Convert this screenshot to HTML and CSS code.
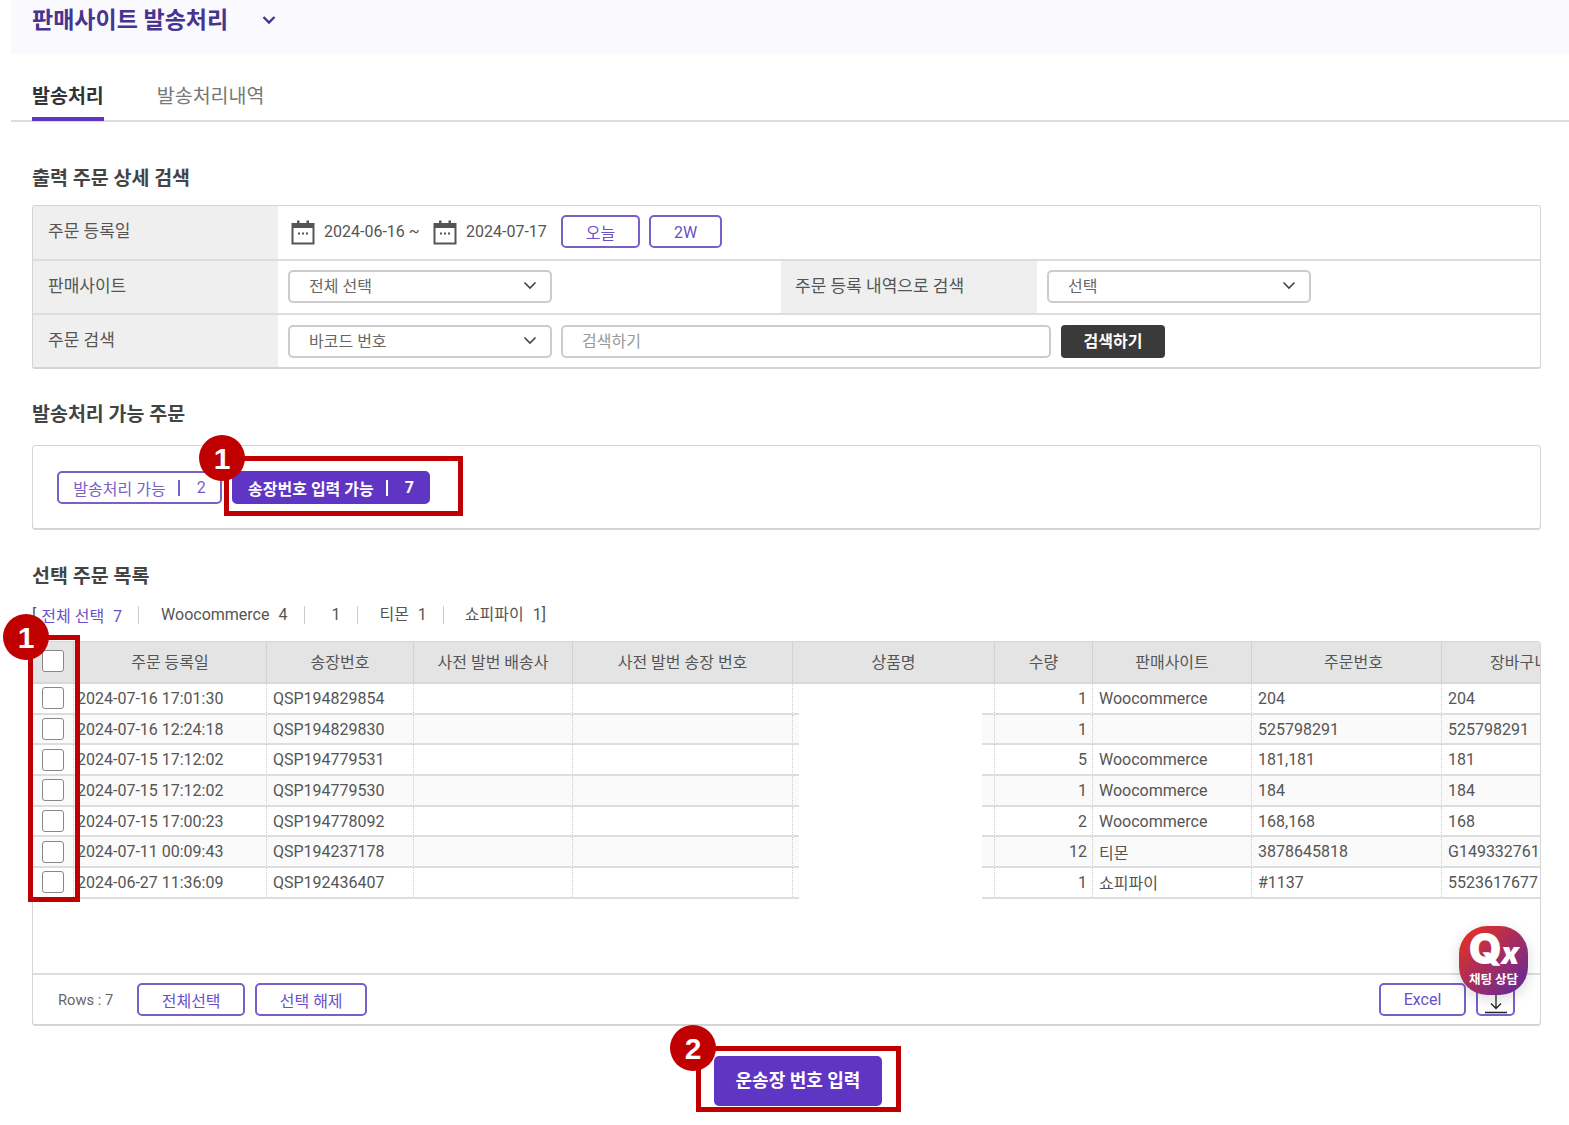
FILE: index.html
```html
<!DOCTYPE html>
<html lang="ko">

<head>
    <meta charset="UTF-8">
    <meta name="viewport" content="width=device-width, initial-scale=1.0">
    <title>판매사이트 발송처리</title>
    <link rel="stylesheet" href="styles.css">
</head>

<body>
    <div class="page">
        <!-- Page header -->
        <header class="page-header">
            <h1>판매사이트 발송처리</h1>
            <svg class="header-chevron" width="14" height="10" viewBox="0 0 14 10">
                <path d="M1.500 2l5.500 5.500 5.500-5.500" fill="none" stroke="#47348f" stroke-width="2.400" />
            </svg>
        </header>

        <!-- Tabs -->
        <nav class="tabs">
            <a class="tab tab-active">발송처리</a>
            <a class="tab">발송처리내역</a>
        </nav>

        <main class="content">
            <!-- Search form -->
            <h2 class="section-title first">출력 주문 상세 검색</h2>
            <div class="search-panel">
                <div class="search-row">
                    <div class="search-label">주문 등록일</div>
                    <div class="search-field">
                        <svg class="cal-icon" width="24" height="26" viewBox="0 0 24 26">
                            <path d="M1.500 5h21v19.500h-21z" fill="none" stroke="#555" stroke-width="2" />
                            <path d="M1 4h22v5H1z" fill="#555" />
                            <path d="M6 1.500h2.500V5H6zM15.500 1.500H18V5h-2.500z" fill="#555" />
                            <path d="M7 13.500h2v2H7zM11 13.500h2v2h-2zM15 13.500h2v2h-2z" fill="#555" />
                        </svg>
                        <span class="date-text">2024-06-16 ~</span>
                        <svg class="cal-icon" width="24" height="26" viewBox="0 0 24 26">
                            <path d="M1.500 5h21v19.500h-21z" fill="none" stroke="#555" stroke-width="2" />
                            <path d="M1 4h22v5H1z" fill="#555" />
                            <path d="M6 1.500h2.500V5H6zM15.500 1.500H18V5h-2.500z" fill="#555" />
                            <path d="M7 13.500h2v2H7zM11 13.500h2v2h-2zM15 13.500h2v2h-2z" fill="#555" />
                        </svg>
                        <span class="date-text date-end">2024-07-17</span>
                        <button class="btn btn-today">오늘</button>
                        <button class="btn btn-2w">2W</button>
                    </div>
                </div>
                <div class="search-row">
                    <div class="search-label">판매사이트</div>
                    <div class="search-field field-half">
                        <div class="select-box">전체 선택
                            <svg width="14" height="9" viewBox="0 0 14 9"><path d="M1.500 1.500L7 7l5.500-5.500" fill="none" stroke="#444" stroke-width="1.600" /></svg>
                        </div>
                    </div>
                    <div class="search-label label-mid">주문 등록 내역으로 검색</div>
                    <div class="search-field">
                        <div class="select-box">선택
                            <svg width="14" height="9" viewBox="0 0 14 9"><path d="M1.500 1.500L7 7l5.500-5.500" fill="none" stroke="#444" stroke-width="1.600" /></svg>
                        </div>
                    </div>
                </div>
                <div class="search-row">
                    <div class="search-label">주문 검색</div>
                    <div class="search-field">
                        <div class="select-box">바코드 번호
                            <svg width="14" height="9" viewBox="0 0 14 9"><path d="M1.500 1.500L7 7l5.500-5.500" fill="none" stroke="#444" stroke-width="1.600" /></svg>
                        </div>
                        <input class="search-input" type="text" placeholder="검색하기">
                        <button class="btn-search">검색하기</button>
                    </div>
                </div>
            </div>

            <!-- Available orders -->
            <h2 class="section-title second">발송처리 가능 주문</h2>
            <div class="status-panel">
                <button class="status-btn">발송처리 가능<i class="bar"></i><span class="status-num">2</span></button>
                <button class="status-btn status-active">송장번호 입력 가능<i class="bar"></i><span class="status-num">7</span></button>
            </div>

            <!-- Order list -->
            <h2 class="section-title third">선택 주문 목록</h2>
            <div class="filter-line">
                <span class="bracket">[</span><span class="filter-all">전체 선택 <b>7</b></span>
                <span class="filter-item">Woocommerce <span class="count">4</span></span>
                <span class="filter-item filter-blank"><span class="count">1</span></span>
                <span class="filter-item filter-short">티몬 <span class="count">1</span></span>
                <span class="filter-item filter-short">쇼피파이 <span class="count">1</span>]</span>
            </div>

            <div class="grid-box">
                <div class="grid-scroll">
                    <table class="grid">
                        <colgroup>
                            <col class="c-check">
                            <col class="c-date">
                            <col class="c-invoice">
                            <col class="c-courier">
                            <col class="c-pre">
                            <col class="c-product">
                            <col class="c-qty">
                            <col class="c-site">
                            <col class="c-order">
                            <col class="c-cart">
                        </colgroup>
                        <thead>
                            <tr>
                                <th><input class="check" type="checkbox"></th>
                                <th>주문 등록일</th>
                                <th>송장번호</th>
                                <th>사전 발번 배송사</th>
                                <th>사전 발번 송장 번호</th>
                                <th>상품명</th>
                                <th>수량</th>
                                <th>판매사이트</th>
                                <th class="th-order">주문번호</th>
                                <th>장바구니</th>
                            </tr>
                        </thead>
                        <tbody>
                            <tr>
                                <td><input class="check" type="checkbox"></td>
                                <td>2024-07-16 17:01:30</td>
                                <td>QSP194829854</td>
                                <td></td>
                                <td></td>
                                <td></td>
                                <td class="num">1</td>
                                <td>Woocommerce</td>
                                <td>204</td>
                                <td>204</td>
                            </tr>
                            <tr>
                                <td><input class="check" type="checkbox"></td>
                                <td>2024-07-16 12:24:18</td>
                                <td>QSP194829830</td>
                                <td></td>
                                <td></td>
                                <td></td>
                                <td class="num">1</td>
                                <td></td>
                                <td>525798291</td>
                                <td>525798291</td>
                            </tr>
                            <tr>
                                <td><input class="check" type="checkbox"></td>
                                <td>2024-07-15 17:12:02</td>
                                <td>QSP194779531</td>
                                <td></td>
                                <td></td>
                                <td></td>
                                <td class="num">5</td>
                                <td>Woocommerce</td>
                                <td>181,181</td>
                                <td>181</td>
                            </tr>
                            <tr>
                                <td><input class="check" type="checkbox"></td>
                                <td>2024-07-15 17:12:02</td>
                                <td>QSP194779530</td>
                                <td></td>
                                <td></td>
                                <td></td>
                                <td class="num">1</td>
                                <td>Woocommerce</td>
                                <td>184</td>
                                <td>184</td>
                            </tr>
                            <tr>
                                <td><input class="check" type="checkbox"></td>
                                <td>2024-07-15 17:00:23</td>
                                <td>QSP194778092</td>
                                <td></td>
                                <td></td>
                                <td></td>
                                <td class="num">2</td>
                                <td>Woocommerce</td>
                                <td>168,168</td>
                                <td>168</td>
                            </tr>
                            <tr>
                                <td><input class="check" type="checkbox"></td>
                                <td>2024-07-11 00:09:43</td>
                                <td>QSP194237178</td>
                                <td></td>
                                <td></td>
                                <td></td>
                                <td class="num">12</td>
                                <td>티몬</td>
                                <td>3878645818</td>
                                <td>G149332761</td>
                            </tr>
                            <tr>
                                <td><input class="check" type="checkbox"></td>
                                <td>2024-06-27 11:36:09</td>
                                <td>QSP192436407</td>
                                <td></td>
                                <td></td>
                                <td></td>
                                <td class="num">1</td>
                                <td>쇼피파이</td>
                                <td>#1137</td>
                                <td>5523617677</td>
                            </tr>
                        </tbody>
                    </table>
                    <!-- product names are blanked out in this capture -->
                    <div class="blank-cover"></div>
                </div>
                <div class="grid-footer">
                    <span class="rows-count">Rows : 7</span>
                    <button class="btn btn-all">전체선택</button>
                    <button class="btn btn-clear">선택 해제</button>
                    <button class="btn btn-excel">Excel</button>
                    <button class="btn btn-down">
                        <svg width="26" height="20" viewBox="0 0 26 20">
                            <path d="M13 1v13M8 9.500l5 5 5-5M2 18.500h22" fill="none" stroke="#222" stroke-width="1.300" />
                        </svg>
                    </button>
                </div>
            </div>

            <div class="action-row">
                <button class="btn-submit">운송장 번호 입력</button>
            </div>
        </main>

        <!-- Floating chat -->
        <div class="chat-badge">
            <span class="chat-logo">Q<em>x</em></span>
            <span class="chat-label">채팅 상담</span>
        </div>

        <!-- Red guide marks drawn on top of the capture -->
        <div class="mark mark-status"></div>
        <div class="mark mark-checks"></div>
        <div class="mark mark-submit"></div>
        <div class="mark-num num-status">1</div>
        <div class="mark-num num-checks">1</div>
        <div class="mark-num num-submit">2</div>
    </div>
</body>

</html>
```

FILE: styles.css
```css
/* Base */
* {
    box-sizing: border-box;
}

body {
    margin: 0;
    background-color: #fff;
    color: #555;
    font-family: Roboto, "Noto Sans CJK KR", sans-serif;
    font-size: 16px;
}

.page {
    position: relative;
    width: 1569px;
    height: 1125px;
    padding-left: 11px;
    overflow: hidden;
}

button {
    font-family: inherit;
    cursor: pointer;
}

/* Header */
.page-header {
    display: flex;
    align-items: center;
    height: 54px;
    padding: 0 0 18px 21px;
    background-color: #faf9fe;
}

.page-header h1 {
    margin: 0;
    font-size: 23px;
    font-weight: 700;
    color: #47348f;
}

.header-chevron {
    margin: 4px 0 0 34px;
}

/* Tabs */
.tabs {
    display: flex;
    gap: 53px;
    height: 68px;
    padding: 28px 0 0 21px;
    border-bottom: 2px solid #ddd;
}

.tab {
    height: 39px;
    font-size: 19.500px;
    line-height: 30px;
    color: #777;
}

.tab-active {
    border-bottom: 4px solid #5f35c4;
    color: #333;
    font-weight: 700;
}

/* Sections */
.content {
    padding: 0 28px 0 21px;
}

.section-title {
    height: 28px;
    font-size: 19.500px;
    font-weight: 700;
    line-height: 28px;
    color: #444;
}

.section-title.first {
    margin: 43px 0 12px;
}

.section-title.second {
    margin: 32px 0 16px;
}

.section-title.third {
    margin: 33px 0 0;
}

/* Search panel */
.search-panel {
    border: 1px solid #d4d4d4;
    border-bottom-width: 2px;
    border-radius: 3px;
    overflow: hidden;
}

.search-row {
    display: flex;
    height: 54px;
    border-bottom: 2px solid #ddd;
}

.search-row:first-child {
    height: 55px;
}

.search-row:last-child {
    height: 52px;
    border-bottom: none;
}

.search-row:last-child .search-field {
    padding-bottom: 0;
}

.search-label {
    flex: 0 0 245px;
    padding: 0 0 6px 15px;
    display: flex;
    align-items: center;
    background-color: #efefef;
    font-size: 17px;
    color: #555;
}

.label-mid {
    flex: 0 0 256px;
    padding-left: 14px;
}

.search-field {
    display: flex;
    align-items: center;
    flex: 1;
    padding: 0 0 2px 10px;
}

.field-half {
    flex: 0 0 503px;
}

.cal-icon {
    margin-left: 3px;
    flex-shrink: 0;
}

.date-text {
    margin-left: 9px;
    width: 106px;
    white-space: nowrap;
}

.date-end {
    width: 95px;
}

/* Buttons */
.btn {
    height: 33px;
    padding: 0;
    border: 2px solid #7a5fc9;
    border-radius: 5px;
    background-color: #fff;
    color: #6a4fc8;
    font-size: 16px;
}

.btn-today {
    width: 79px;
    margin-left: 0;
}

.btn-2w {
    width: 73px;
    margin-left: 9px;
    padding-top: 2px;
}

.select-box {
    display: flex;
    align-items: center;
    justify-content: space-between;
    width: 264px;
    height: 33px;
    padding: 0 13px 2px 19px;
    border: 2px solid #ccc;
    border-radius: 5px;
    background-color: #fff;
    font-size: 16px;
    color: #666;
}

.search-input {
    width: 490px;
    height: 33px;
    margin-left: 9px;
    padding: 0 19px;
    border: 2px solid #ccc;
    border-radius: 5px;
    font-family: inherit;
    font-size: 16px;
}

.search-input::placeholder {
    color: #999;
}

.btn-search {
    width: 104px;
    height: 33px;
    margin-left: 10px;
    padding: 0 0 2px;
    border: none;
    border-radius: 4px;
    background-color: #3a3a3a;
    color: #fff;
    font-size: 16px;
    font-weight: 700;
}

/* Status buttons */
.status-panel {
    display: flex;
    gap: 10px;
    height: 85px;
    padding: 25px 0 0 24px;
    border: 1px solid #d4d4d4;
    border-bottom-width: 2px;
    border-radius: 4px;
}

.status-btn {
    display: flex;
    align-items: center;
    justify-content: center;
    height: 33px;
    width: 165px;
    padding: 0;
    border: 2px solid #7a5fc9;
    border-radius: 5px;
    background-color: #fff;
    color: #7a5fc9;
    font-size: 16px;
}

.status-active {
    width: 198px;
    border-color: #5f35c4;
    background-color: #5f35c4;
    color: #fff;
    font-weight: 700;
}

.bar {
    width: 2px;
    height: 16px;
    margin: 0 17px 0 12px;
    background-color: currentColor;
}

.status-num {
    font-size: 16px;
}

/* Filter line */
.filter-line {
    display: flex;
    align-items: center;
    height: 24px;
    margin-top: 12px;
    margin-bottom: 14px;
    font-size: 16px;
    color: #555;
}

.bracket {
    margin-right: 5px;
}

.filter-all {
    color: #6a4fc8;
    padding-right: 16px;
}

.filter-all b {
    font-weight: 400;
    margin-left: 5px;
}

.filter-item {
    padding: 0 17px 0 22px;
    border-left: 1px solid #ccc;
    line-height: 18px;
}

.filter-blank {
    padding-left: 21px;
}

.filter-short {
    padding-left: 21px;
    padding-right: 16px;
}

.count {
    margin-left: 5px;
}

/* Data grid */
.grid-box {
    display: flex;
    flex-direction: column;
    height: 385px;
    border: 1px solid #d4d4d4;
    border-bottom-width: 2px;
    border-radius: 4px;
    overflow: hidden;
}

.grid-scroll {
    position: relative;
    flex: 1;
    overflow: hidden;
}

.grid {
    width: 1565px;
    table-layout: fixed;
    border-collapse: separate;
    border-spacing: 0;
}

.c-check { width: 41px; }
.c-date { width: 193px; }
.c-invoice { width: 147px; }
.c-courier { width: 159px; }
.c-pre { width: 220px; }
.c-product { width: 202px; }
.c-qty { width: 98px; }
.c-site { width: 159px; }
.c-order { width: 190px; }
.c-cart { width: 156px; }

.grid th {
    height: 42px;
    padding: 0 0 2px;
    background-color: #e4e4e4;
    border-right: 1px solid #d2d2d2;
    border-bottom: 2px solid #d8d8d8;
    font-weight: 400;
    color: #555;
    white-space: nowrap;
}

.grid th.th-order {
    padding-left: 14px;
}

.grid td {
    height: 30.700px;
    padding: 0 0 0 6px;
    border-right: 1px dotted #ccc;
    border-bottom: 2px solid #ddd;
    white-space: nowrap;
    overflow: hidden;
}

.grid td:nth-child(1) {
    padding: 0;
    text-align: center;
}

.grid td:nth-child(2) {
    padding-left: 3px;
}

.grid tbody tr:nth-child(even) td {
    background-color: #fafafa;
}

.grid td.num {
    padding: 0 5px 0 0;
    text-align: right;
}

.check {
    appearance: none;
    display: block;
    width: 22px;
    height: 22px;
    margin: 0 auto;
    border: 1.500px solid #888;
    border-radius: 3px;
    background-color: #fff;
}

.blank-cover {
    position: absolute;
    left: 766px;
    top: 42px;
    width: 183px;
    height: 220px;
    background-color: #fff;
}

.grid-footer {
    display: flex;
    align-items: center;
    height: 51px;
    padding: 0 25px 0 25px;
    border-top: 2px solid #ddd;
}

.rows-count {
    font-size: 14.700px;
    color: #666;
    margin-right: 24px;
}

.btn-all {
    width: 108px;
}

.btn-clear {
    width: 112px;
    margin-left: 10px;
}

.btn-excel {
    width: 87px;
    margin-left: auto;
}

.btn-down {
    display: flex;
    align-items: flex-end;
    justify-content: center;
    width: 39px;
    margin-left: 10px;
}

/* Submit */
.action-row {
    display: flex;
    justify-content: center;
    margin-top: 30px;
    padding-left: 23px;
}

.btn-submit {
    width: 168px;
    height: 50px;
    padding: 0 0 5px;
    border: none;
    border-radius: 5px;
    background-color: #5f35c4;
    color: #fff;
    font-size: 18px;
    font-weight: 700;
}

/* Chat badge */
.chat-badge {
    position: absolute;
    left: 1459px;
    top: 926px;
    display: flex;
    flex-direction: column;
    align-items: center;
    width: 69px;
    height: 69px;
    border-radius: 28px;
    background: linear-gradient(135deg, #d9302e 15%, #6a2a96 90%);
    box-shadow: 0 4px 14px rgba(0, 0, 0, 0.15);
    color: #fff;
}

.chat-logo {
    height: 45px;
    font-family: Inter, sans-serif;
    font-size: 42px;
    font-weight: 900;
    line-height: 46px;
    letter-spacing: -1px;
    white-space: nowrap;
}

.chat-logo em {
    font-size: 30px;
}

.chat-label {
    font-size: 12.500px;
    font-weight: 700;
    line-height: 18px;
}

/* Guide marks */
.mark {
    position: absolute;
    border: 5px solid #c00000;
}

.mark-status {
    left: 224px;
    top: 456px;
    width: 239px;
    height: 60px;
}

.mark-checks {
    left: 28px;
    top: 635px;
    width: 52px;
    height: 267px;
}

.mark-submit {
    left: 696px;
    top: 1046px;
    width: 205px;
    height: 66px;
}

.mark-num {
    position: absolute;
    width: 46px;
    height: 46px;
    border-radius: 50%;
    background-color: #c00000;
    color: #fff;
    font-family: "Liberation Sans", sans-serif;
    font-size: 30px;
    font-weight: 700;
    line-height: 48px;
    text-align: center;
}

.num-status {
    left: 199px;
    top: 435px;
}

.num-checks {
    left: 3px;
    top: 614px;
}

.num-submit {
    left: 670px;
    top: 1025px;
}
```
